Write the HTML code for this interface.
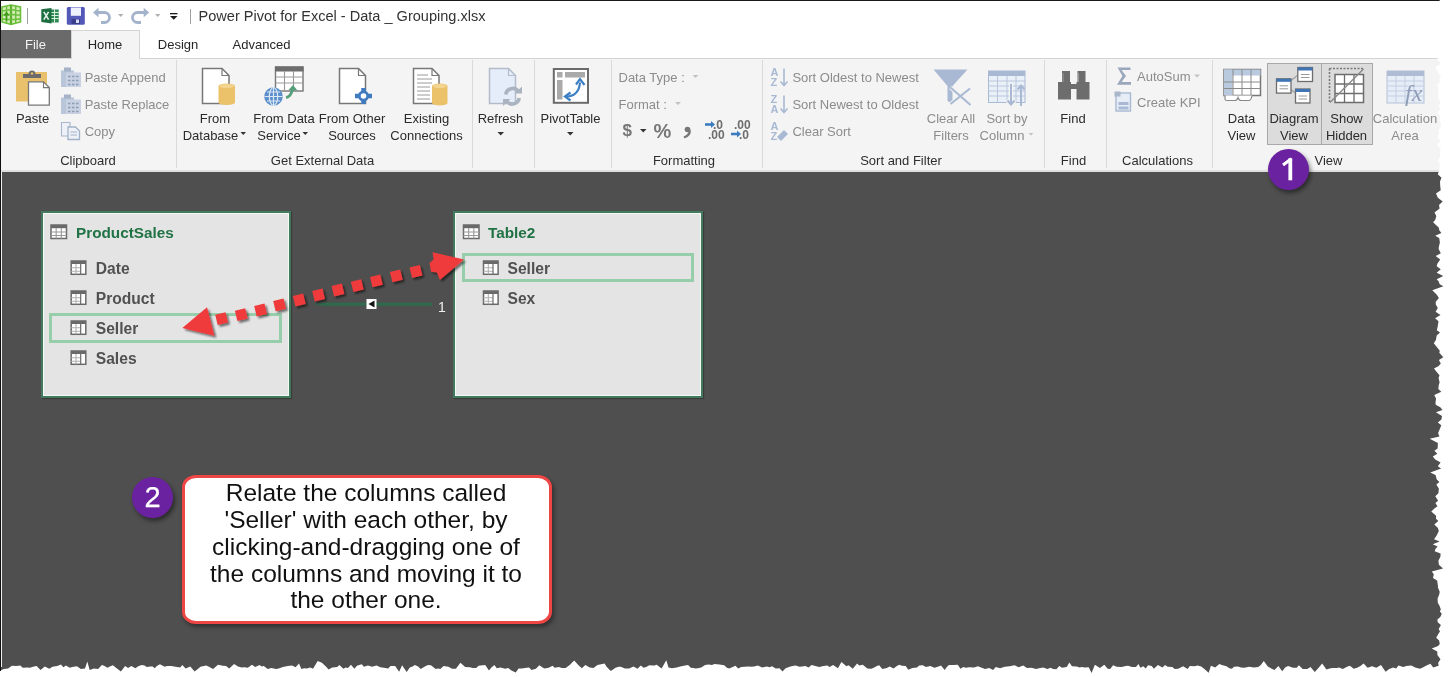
<!DOCTYPE html>
<html><head><meta charset="utf-8"><style>
html,body{margin:0;padding:0;width:1448px;height:677px;overflow:hidden;background:#ffffff;font-family:"Liberation Sans", sans-serif;}
#root{position:relative;width:1448px;height:677px;overflow:hidden;will-change:transform;}
</style></head><body><div id="root">
<div style="position:absolute;left:0px;top:0px;width:1448px;height:30px;background:#ffffff;"></div><div style="position:absolute;left:0px;top:30px;width:1448px;height:28px;background:#ffffff;"></div><div style="position:absolute;left:0px;top:58px;width:1448px;height:114px;background:#f4f4f4;"></div><div style="position:absolute;left:0px;top:58px;width:1448px;height:1px;background:#d4d4d4;"></div><div style="position:absolute;left:0px;top:169.5px;width:1448px;height:2.5px;background:#dfdfdf;"></div><div style="position:absolute;left:0px;top:172px;width:1448px;height:505px;background:#4f4f4f;"></div><div style="position:absolute;left:0px;top:0px;width:1448px;height:1px;background:#1a1a1a;"></div><div style="position:absolute;left:0px;top:30px;width:71px;height:28px;background:#6a6a6a;"></div><div style="position:absolute;left:71px;top:30px;width:69px;height:29px;background:#f4f4f4;border:1px solid #d4d4d4;border-bottom:none;box-sizing:border-box;"></div><div style="position:absolute;left:176px;top:60px;width:1px;height:108px;background:#dadada;"></div><div style="position:absolute;left:472px;top:60px;width:1px;height:108px;background:#dadada;"></div><div style="position:absolute;left:534px;top:60px;width:1px;height:108px;background:#dadada;"></div><div style="position:absolute;left:611px;top:60px;width:1px;height:108px;background:#dadada;"></div><div style="position:absolute;left:762px;top:60px;width:1px;height:108px;background:#dadada;"></div><div style="position:absolute;left:1044px;top:60px;width:1px;height:108px;background:#dadada;"></div><div style="position:absolute;left:1106px;top:60px;width:1px;height:108px;background:#dadada;"></div><div style="position:absolute;left:1212px;top:60px;width:1px;height:108px;background:#dadada;"></div><div style="position:absolute;left:1267px;top:63px;width:55.5px;height:81.5px;background:#dcdcdc;border:1.3px solid #a9a9a9;box-sizing:border-box;"></div><div style="position:absolute;left:1321px;top:63px;width:51.5px;height:81.5px;background:#dcdcdc;border:1.3px solid #a9a9a9;box-sizing:border-box;"></div><div style="position:absolute;left:198.50px;top:8.98px;font-size:14.55px;line-height:14.55px;color:#333333;font-weight:normal;white-space:nowrap;">Power Pivot for Excel - Data _ Grouping.xlsx</div><div style="position:absolute;left:190px;top:9px;width:1px;height:15px;background:#a0a0a0;"></div><div style="position:absolute;left:27px;top:8px;width:1px;height:16px;background:#a0a0a0;"></div><div style="position:absolute;left:5.50px;top:38.00px;width:60px;text-align:center;font-size:13px;line-height:13px;color:#f4f4f4;font-weight:normal;white-space:nowrap;">File</div><div style="position:absolute;left:75.00px;top:38.00px;width:60px;text-align:center;font-size:13px;line-height:13px;color:#262626;font-weight:normal;white-space:nowrap;">Home</div><div style="position:absolute;left:148.00px;top:38.00px;width:60px;text-align:center;font-size:13px;line-height:13px;color:#262626;font-weight:normal;white-space:nowrap;">Design</div><div style="position:absolute;left:221.50px;top:38.00px;width:80px;text-align:center;font-size:13px;line-height:13px;color:#262626;font-weight:normal;white-space:nowrap;">Advanced</div><div style="position:absolute;left:2.50px;top:112.00px;width:60px;text-align:center;font-size:13px;line-height:13px;color:#2b2b2b;font-weight:normal;white-space:nowrap;">Paste</div><div style="position:absolute;left:84.70px;top:70.50px;font-size:13px;line-height:13px;color:#8c8c8c;font-weight:normal;white-space:nowrap;">Paste Append</div><div style="position:absolute;left:84.70px;top:97.50px;font-size:13px;line-height:13px;color:#8c8c8c;font-weight:normal;white-space:nowrap;">Paste Replace</div><div style="position:absolute;left:84.70px;top:124.50px;font-size:13px;line-height:13px;color:#8c8c8c;font-weight:normal;white-space:nowrap;">Copy</div><div style="position:absolute;left:38.00px;top:154.00px;width:100px;text-align:center;font-size:13px;line-height:13px;color:#2e2e2e;font-weight:normal;white-space:nowrap;">Clipboard</div><div style="position:absolute;left:170.00px;top:112.00px;width:90px;text-align:center;font-size:13px;line-height:13px;color:#2b2b2b;font-weight:normal;white-space:nowrap;">From</div><div style="position:absolute;left:165.50px;top:129.00px;width:90px;text-align:center;font-size:13px;line-height:13px;color:#2b2b2b;font-weight:normal;white-space:nowrap;">Database</div><div style="position:absolute;left:239.00px;top:112.00px;width:90px;text-align:center;font-size:13px;line-height:13px;color:#2b2b2b;font-weight:normal;white-space:nowrap;">From Data</div><div style="position:absolute;left:234.00px;top:129.00px;width:90px;text-align:center;font-size:13px;line-height:13px;color:#2b2b2b;font-weight:normal;white-space:nowrap;">Service</div><div style="position:absolute;left:307.00px;top:112.00px;width:90px;text-align:center;font-size:13px;line-height:13px;color:#2b2b2b;font-weight:normal;white-space:nowrap;">From Other</div><div style="position:absolute;left:307.00px;top:129.00px;width:90px;text-align:center;font-size:13px;line-height:13px;color:#2b2b2b;font-weight:normal;white-space:nowrap;">Sources</div><div style="position:absolute;left:381.50px;top:112.00px;width:90px;text-align:center;font-size:13px;line-height:13px;color:#2b2b2b;font-weight:normal;white-space:nowrap;">Existing</div><div style="position:absolute;left:381.50px;top:129.00px;width:90px;text-align:center;font-size:13px;line-height:13px;color:#2b2b2b;font-weight:normal;white-space:nowrap;">Connections</div><div style="position:absolute;left:252.50px;top:154.00px;width:140px;text-align:center;font-size:13px;line-height:13px;color:#2e2e2e;font-weight:normal;white-space:nowrap;">Get External Data</div><div style="position:absolute;left:460.50px;top:112.00px;width:80px;text-align:center;font-size:13px;line-height:13px;color:#2b2b2b;font-weight:normal;white-space:nowrap;">Refresh</div><div style="position:absolute;left:530.50px;top:112.00px;width:80px;text-align:center;font-size:13px;line-height:13px;color:#2b2b2b;font-weight:normal;white-space:nowrap;">PivotTable</div><div style="position:absolute;left:634.00px;top:154.00px;width:100px;text-align:center;font-size:13px;line-height:13px;color:#2e2e2e;font-weight:normal;white-space:nowrap;">Formatting</div><div style="position:absolute;left:618.50px;top:70.50px;font-size:13px;line-height:13px;color:#8c8c8c;font-weight:normal;white-space:nowrap;">Data Type :</div><div style="position:absolute;left:618.50px;top:97.50px;font-size:13px;line-height:13px;color:#8c8c8c;font-weight:normal;white-space:nowrap;">Format :</div><div style="position:absolute;left:792.40px;top:70.50px;font-size:13px;line-height:13px;color:#8c8c8c;font-weight:normal;white-space:nowrap;">Sort Oldest to Newest</div><div style="position:absolute;left:792.40px;top:97.50px;font-size:13px;line-height:13px;color:#8c8c8c;font-weight:normal;white-space:nowrap;">Sort Newest to Oldest</div><div style="position:absolute;left:792.40px;top:124.50px;font-size:13px;line-height:13px;color:#8c8c8c;font-weight:normal;white-space:nowrap;">Clear Sort</div><div style="position:absolute;left:911.00px;top:112.00px;width:80px;text-align:center;font-size:13px;line-height:13px;color:#8c8c8c;font-weight:normal;white-space:nowrap;">Clear All</div><div style="position:absolute;left:911.00px;top:129.00px;width:80px;text-align:center;font-size:13px;line-height:13px;color:#8c8c8c;font-weight:normal;white-space:nowrap;">Filters</div><div style="position:absolute;left:967.00px;top:112.00px;width:80px;text-align:center;font-size:13px;line-height:13px;color:#8c8c8c;font-weight:normal;white-space:nowrap;">Sort by</div><div style="position:absolute;left:962.00px;top:129.00px;width:80px;text-align:center;font-size:13px;line-height:13px;color:#8c8c8c;font-weight:normal;white-space:nowrap;">Column</div><div style="position:absolute;left:831.00px;top:154.00px;width:140px;text-align:center;font-size:13px;line-height:13px;color:#2e2e2e;font-weight:normal;white-space:nowrap;">Sort and Filter</div><div style="position:absolute;left:1043.00px;top:112.00px;width:60px;text-align:center;font-size:13px;line-height:13px;color:#2b2b2b;font-weight:normal;white-space:nowrap;">Find</div><div style="position:absolute;left:1043.50px;top:154.00px;width:60px;text-align:center;font-size:13px;line-height:13px;color:#2e2e2e;font-weight:normal;white-space:nowrap;">Find</div><div style="position:absolute;left:1137.00px;top:70.00px;font-size:13px;line-height:13px;color:#8c8c8c;font-weight:normal;white-space:nowrap;">AutoSum</div><div style="position:absolute;left:1137.00px;top:96.00px;font-size:13px;line-height:13px;color:#8c8c8c;font-weight:normal;white-space:nowrap;">Create KPI</div><div style="position:absolute;left:1107.50px;top:154.00px;width:100px;text-align:center;font-size:13px;line-height:13px;color:#2e2e2e;font-weight:normal;white-space:nowrap;">Calculations</div><div style="position:absolute;left:1211.50px;top:112.00px;width:60px;text-align:center;font-size:13px;line-height:13px;color:#2b2b2b;font-weight:normal;white-space:nowrap;">Data</div><div style="position:absolute;left:1211.50px;top:129.00px;width:60px;text-align:center;font-size:13px;line-height:13px;color:#2b2b2b;font-weight:normal;white-space:nowrap;">View</div><div style="position:absolute;left:1264.00px;top:112.00px;width:60px;text-align:center;font-size:13px;line-height:13px;color:#2b2b2b;font-weight:normal;white-space:nowrap;">Diagram</div><div style="position:absolute;left:1264.00px;top:129.00px;width:60px;text-align:center;font-size:13px;line-height:13px;color:#2b2b2b;font-weight:normal;white-space:nowrap;">View</div><div style="position:absolute;left:1316.50px;top:112.00px;width:60px;text-align:center;font-size:13px;line-height:13px;color:#2b2b2b;font-weight:normal;white-space:nowrap;">Show</div><div style="position:absolute;left:1316.50px;top:129.00px;width:60px;text-align:center;font-size:13px;line-height:13px;color:#2b2b2b;font-weight:normal;white-space:nowrap;">Hidden</div><div style="position:absolute;left:1365.00px;top:112.00px;width:80px;text-align:center;font-size:13px;line-height:13px;color:#8c8c8c;font-weight:normal;white-space:nowrap;">Calculation</div><div style="position:absolute;left:1365.00px;top:129.00px;width:80px;text-align:center;font-size:13px;line-height:13px;color:#8c8c8c;font-weight:normal;white-space:nowrap;">Area</div><div style="position:absolute;left:1298.50px;top:154.00px;width:60px;text-align:center;font-size:13px;line-height:13px;color:#2e2e2e;font-weight:normal;white-space:nowrap;">View</div><div style="position:absolute;left:41px;top:211px;width:249.5px;height:187px;background:#e4e4e4;border:2px solid #437a5e;box-sizing:border-box;box-shadow:inset 1px 1px 0 #f2faf5, inset -1px -1px 0 #f2faf5, 1px 1px 1px rgba(0,0,0,0.25);"></div><div style="position:absolute;left:453px;top:211px;width:249.5px;height:187px;background:#e4e4e4;border:2px solid #437a5e;box-sizing:border-box;box-shadow:inset 1px 1px 0 #f2faf5, inset -1px -1px 0 #f2faf5, 1px 1px 1px rgba(0,0,0,0.25);"></div><div style="position:absolute;left:49px;top:313px;width:233px;height:30px;background:transparent;border:3.2px solid #96cdab;box-sizing:border-box;"></div><div style="position:absolute;left:462px;top:253px;width:232px;height:29px;background:transparent;border:3.2px solid #96cdab;box-sizing:border-box;"></div><div style="position:absolute;left:76.00px;top:225.05px;font-size:15.3px;line-height:15.3px;color:#217346;font-weight:bold;white-space:nowrap;">ProductSales</div><div style="position:absolute;left:95.80px;top:260.79px;font-size:15.6px;line-height:15.6px;color:#515151;font-weight:bold;white-space:nowrap;">Date</div><div style="position:absolute;left:95.80px;top:290.79px;font-size:15.6px;line-height:15.6px;color:#515151;font-weight:bold;white-space:nowrap;">Product</div><div style="position:absolute;left:95.80px;top:320.79px;font-size:15.6px;line-height:15.6px;color:#515151;font-weight:bold;white-space:nowrap;">Seller</div><div style="position:absolute;left:95.80px;top:350.79px;font-size:15.6px;line-height:15.6px;color:#515151;font-weight:bold;white-space:nowrap;">Sales</div><div style="position:absolute;left:488.00px;top:225.05px;font-size:15.3px;line-height:15.3px;color:#217346;font-weight:bold;white-space:nowrap;">Table2</div><div style="position:absolute;left:507.50px;top:260.79px;font-size:15.6px;line-height:15.6px;color:#515151;font-weight:bold;white-space:nowrap;">Seller</div><div style="position:absolute;left:507.50px;top:290.79px;font-size:15.6px;line-height:15.6px;color:#515151;font-weight:bold;white-space:nowrap;">Sex</div><div style="position:absolute;left:438.00px;top:299.65px;font-size:14px;line-height:14px;color:#f0f0f0;font-weight:normal;white-space:nowrap;">1</div><div style="position:absolute;left:182px;top:475px;width:370px;height:149px;background:#ffffff;border:3.6px solid #ee4545;border-radius:14px / 12px;box-sizing:border-box;box-shadow:2px 3px 4px rgba(0,0,0,0.4);"></div><div style="position:absolute;left:186.00px;top:481.16px;width:360px;text-align:center;font-size:24.5px;line-height:24.5px;color:#111111;font-weight:normal;white-space:nowrap;">Relate the columns called</div><div style="position:absolute;left:186.00px;top:507.96px;width:360px;text-align:center;font-size:24.5px;line-height:24.5px;color:#111111;font-weight:normal;white-space:nowrap;">'Seller' with each other, by</div><div style="position:absolute;left:186.00px;top:534.76px;width:360px;text-align:center;font-size:24.5px;line-height:24.5px;color:#111111;font-weight:normal;white-space:nowrap;">clicking-and-dragging one of</div><div style="position:absolute;left:186.00px;top:561.56px;width:360px;text-align:center;font-size:24.5px;line-height:24.5px;color:#111111;font-weight:normal;white-space:nowrap;">the columns and moving it to</div><div style="position:absolute;left:186.00px;top:588.36px;width:360px;text-align:center;font-size:24.5px;line-height:24.5px;color:#111111;font-weight:normal;white-space:nowrap;">the other one.</div><div style="position:absolute;left:1267.65px;top:148.95px;width:41.5px;height:41.5px;border-radius:50%;background:#6b22a0;box-shadow:2px 3px 4px rgba(0,0,0,0.45);"></div><div style="position:absolute;left:132.0px;top:476.5px;width:41px;height:41px;border-radius:50%;background:#6b22a0;box-shadow:2px 3px 4px rgba(0,0,0,0.45);"></div><div style="position:absolute;left:132.50px;top:482.65px;width:40px;text-align:center;font-size:29px;line-height:29px;color:#ffffff;font-weight:normal;white-space:nowrap;-webkit-text-stroke:0.25px #ffffff;">2</div><svg width="1448" height="677" style="position:absolute;left:0;top:0"><path d="M1290.3,180.3 V158.3" stroke="#ffffff" stroke-width="3.8" fill="none"/><path d="M1291.5,158.8 L1283,165" stroke="#ffffff" stroke-width="3.2" fill="none"/></svg>
<svg width="1448" height="677" viewBox="0 0 1448 677" style="position:absolute;left:0;top:0">
<g><path d="M2,7 L11,5 L20.5,7 L20.5,22 L11,24.5 L2,22 Z" fill="#d2ecb4" stroke="#6abf3c" stroke-width="1.6"/><path d="M11,5 L11,24.5" stroke="#5cb22e" stroke-width="2.2"/><path d="M2,11 L11,9.5 L20.5,11 M2,15 L11,14.5 L20.5,15 M2,19 L11,19.5 L20.5,19 M6.5,6 V23.2 M15.7,6 V23.2" stroke="#6abf3c" stroke-width="1.5" fill="none"/><path d="M6.5,21 L6.5,13.5 M4.3,15.5 L6.5,12.8 L8.7,15.5" stroke="#3f9a1c" stroke-width="1.5" fill="none"/></g><rect x="50" y="9.5" width="8.7" height="13" fill="#2f8a55"/><path d="M50.5,12.5 H58.7 M50.5,15.5 H58.7 M50.5,18.5 H58.7 M54.5,9.5 V22.5" stroke="#d9efe0" stroke-width="1"/><path d="M41.3,9.3 L51.5,7.9 L51.5,23.4 L41.3,22 Z" fill="#1d6f42"/><path d="M43.8,11.8 L48.6,19.6 M48.6,11.8 L43.8,19.6" stroke="#e6f3ea" stroke-width="1.6"/><rect x="66.8" y="7" width="18" height="17.7" rx="1.5" fill="#5257b8"/><rect x="70.8" y="7.5" width="10.2" height="8.3" fill="#eef0fb"/><rect x="71.5" y="19" width="8.5" height="5" fill="#3a3d8a"/><rect x="76" y="19.5" width="3" height="3.5" fill="#d8dbf5"/><path d="M96,12.5 H104.5 A5,5 0 0 1 104.5,22.5 H101" stroke="#a3b3cb" stroke-width="2.8" fill="none"/><path d="M93,12.5 L98.5,7.8 L98.5,17.2 Z" fill="#a3b3cb"/><path d="M118,14 L123.5,14 L120.75,17 Z" fill="#b0b0b0"/><path d="M146,12.5 H137.5 A5,5 0 0 0 137.5,22.5 H141" stroke="#a3b3cb" stroke-width="2.8" fill="none"/><path d="M149.2,12.5 L143.7,7.8 L143.7,17.2 Z" fill="#a3b3cb"/><path d="M155,14 L160.5,14 L157.75,17 Z" fill="#b0b0b0"/><rect x="170" y="13" width="7.5" height="1.3" fill="#1a1a1a"/><path d="M170,16 L177.5,16 L173.75,19.8 Z" fill="#1a1a1a"/><rect x="16" y="72" width="31" height="29.5" fill="#e9c16c"/><path d="M23,78 L23,74 L28.5,74 A3.5,3.5 0 0 1 35.5,74 L41,74 L41,78 Z" fill="#6b6b6b"/><circle cx="32" cy="73.5" r="1.2" fill="#e9c16c"/><path d="M28.5,81.8 L43.5,81.8 L49.3,87.6 L49.3,105.2 L28.5,105.2 Z" fill="#ffffff" stroke="#777" stroke-width="1.3"/><path d="M43.5,81.8 L43.5,87.6 L49.3,87.6" fill="none" stroke="#777" stroke-width="1.1"/><g fill="#b9c5d8"><rect x="61" y="70.5" width="13" height="16.5"/><rect x="64" y="67.5" width="7" height="4" fill="#a5b2c8"/><rect x="66" y="72.5" width="15" height="14.5" fill="#c8d2e2"/></g><path d="M68,76.5 H80 M68,80.5 H80 M68,84.5 H80" stroke="#8d9bb4" stroke-width="1.4" stroke-dasharray="2.5,1.5"/><g fill="#b9c5d8"><rect x="61" y="97.5" width="13" height="16.5"/><rect x="64" y="94.5" width="7" height="4" fill="#a5b2c8"/><rect x="66" y="99.5" width="15" height="14.5" fill="#c8d2e2"/></g><path d="M68,103.5 H80 M68,107.5 H80 M68,111.5 H80" stroke="#8d9bb4" stroke-width="1.4" stroke-dasharray="2.5,1.5"/><path d="M61.5,122.5 H70 V136 H61.5 Z" fill="#eef2f8" stroke="#a9b6cb" stroke-width="1.1"/><path d="M68,127 H75.5 L79.5,131 V139.5 H68 Z" fill="#eef2f8" stroke="#a3b1c8" stroke-width="1.3"/><path d="M70.5,132 H77 M70.5,135 H77" stroke="#a3b1c8" stroke-width="1"/><path d="M202.5,68.5 L222,68.5 L229,75.5 L229,103.5 L202.5,103.5 Z" fill="#ffffff" stroke="#777" stroke-width="1.5"/><path d="M222,68.5 L222,75.5 L229,75.5" fill="none" stroke="#777" stroke-width="1.2"/><path d="M218.5,86.0 A8.25,2.5 0 0 1 235,86.0 L235,102.5 A8.25,2.5 0 0 1 218.5,102.5 Z" fill="#ebc26a"/><ellipse cx="226.75" cy="86.0" rx="7.25" ry="2" fill="#f3d58f"/><rect x="275.5" y="67" width="27.5" height="24" fill="#fff" stroke="#777" stroke-width="1.4"/><rect x="275" y="66.5" width="28.5" height="5" fill="#6d6d6d"/><path d="M275.5,77 H303 M275.5,83 H303 M284.5,71 V91 M293.5,71 V91" stroke="#999" stroke-width="1.1"/><circle cx="273.5" cy="96.5" r="9.3" fill="#5b8fcb"/><path d="M264.5,96.5 H282.5 M273.5,87.5 V105.5 M267,92 H280 M267,101 H280" stroke="#dbe8f6" stroke-width="1.2"/><ellipse cx="273.5" cy="96.5" rx="4.2" ry="9" fill="none" stroke="#dbe8f6" stroke-width="1.2"/><path d="M286,97.5 Q291,97 292.5,89" stroke="#55a07a" stroke-width="2.8" fill="none"/><path d="M288.5,90 L293,85 L297.5,90.5 Z" fill="#55a07a"/><path d="M339.5,68.5 L358.5,68.5 L365.5,75.5 L365.5,103.5 L339.5,103.5 Z" fill="#ffffff" stroke="#777" stroke-width="1.5"/><path d="M358.5,68.5 L358.5,75.5 L365.5,75.5" fill="none" stroke="#777" stroke-width="1.2"/><path d="M363.5,88 V104 M355,96 H372" stroke="#3f7bc0" stroke-width="4.5"/><circle cx="363.5" cy="96" r="5.5" fill="#3f7bc0"/><circle cx="363.5" cy="96" r="2.8" fill="#fff"/><path d="M413.5,68.5 L432,68.5 L439,75.5 L439,103.5 L413.5,103.5 Z" fill="#ffffff" stroke="#777" stroke-width="1.5"/><path d="M432,68.5 L432,75.5 L439,75.5" fill="none" stroke="#777" stroke-width="1.2"/><path d="M417,75 H428 M417,79 H432 M417,83 H432 M417,87 H430 M417,91 H430 M417,95 H430 M417,99 H430" stroke="#999" stroke-width="1"/><path d="M432,86.0 A7.75,2.5 0 0 1 447.5,86.0 L447.5,103.0 A7.75,2.5 0 0 1 432,103.0 Z" fill="#ebc26a"/><ellipse cx="439.75" cy="86.0" rx="6.75" ry="2" fill="#f3d58f"/><path d="M489.5,68.5 L508.5,68.5 L515.5,75.5 L515.5,103.5 L489.5,103.5 Z" fill="#e4edf9" stroke="#b2bccb" stroke-width="1.5"/><path d="M508.5,68.5 L508.5,75.5 L515.5,75.5" fill="none" stroke="#b2bccb" stroke-width="1.2"/><path d="M505.8,94.5 A7,7 0 0 1 518.5,91.5" fill="none" stroke="#abb3c1" stroke-width="3.6"/><path d="M519.2,98 A7,7 0 0 1 506.5,101" fill="none" stroke="#abb3c1" stroke-width="3.6"/><path d="M514.5,93.5 L522,93.5 L522,86.5 Z" fill="#abb3c1"/><path d="M510.5,99 L503,99 L503,106 Z" fill="#abb3c1"/><rect x="553.8" y="69" width="34.2" height="33.8" fill="#fff" stroke="#6b6b6b" stroke-width="2"/><rect x="557" y="72" width="5.5" height="5.5" fill="#aaaaaa"/><rect x="565" y="72" width="20" height="5.5" fill="#aaaaaa"/><rect x="557" y="80" width="5.5" height="19.5" fill="#aaaaaa"/><path d="M566.5,96.5 Q579,96 580,82.5" stroke="#3d7fc4" stroke-width="2.2" fill="none"/><path d="M576,84.5 L580,79 L584.5,85" stroke="#3d7fc4" stroke-width="2.2" fill="none"/><path d="M570.5,92.5 L565,96.5 L570.5,100.5" stroke="#3d7fc4" stroke-width="2.2" fill="none"/><path d="M497.5,132 L504,132 L500.75,135.5 Z" fill="#333"/><path d="M567,132 L573.5,132 L570.25,135.5 Z" fill="#333"/><path d="M240.5,132 L246,132 L243.25,135 Z" fill="#333"/><path d="M302.5,132 L308,132 L305.25,135 Z" fill="#333"/><path d="M692.5,75 L698.5,75 L695.5,78 Z" fill="#c2c2c2"/><path d="M675,102 L681,102 L678,105 Z" fill="#c2c2c2"/><text x="622.5" y="136" font-family="Liberation Sans" font-weight="bold" font-size="17" fill="#777">$</text><path d="M640,129 L646.5,129 L643.25,132.5 Z" fill="#333"/><text x="653.5" y="138" font-family="Liberation Sans" font-size="20" font-weight="bold" fill="#777">%</text><circle cx="687.5" cy="129.5" r="2.8" fill="#777"/><path d="M689.5,130 Q690.5,135 684,137.5" stroke="#777" stroke-width="2.4" fill="none"/><path d="M705,124.5 H712" stroke="#3d7cc0" stroke-width="2.6"/><path d="M711,121 L715,124.5 L711,128 Z" fill="#3d7cc0"/><text x="713" y="129" font-family="Liberation Sans" font-weight="bold" font-size="12" fill="#6d6d6d">.0</text><text x="708" y="138.5" font-family="Liberation Sans" font-weight="bold" font-size="12" fill="#6d6d6d">.00</text><text x="734" y="129" font-family="Liberation Sans" font-weight="bold" font-size="12" fill="#6d6d6d">.00</text><path d="M731,134 H738" stroke="#3d7cc0" stroke-width="2.6"/><path d="M737,130.5 L741,134 L737,137.5 Z" fill="#3d7cc0"/><text x="739" y="138.5" font-family="Liberation Sans" font-weight="bold" font-size="12" fill="#6d6d6d">.0</text><text x="770.5" y="76.0" font-family="Liberation Sans" font-weight="bold" font-size="11" fill="#a9b9d3">A</text><text x="770.5" y="85.5" font-family="Liberation Sans" font-weight="bold" font-size="11" fill="#a9b9d3">Z</text><path d="M784,68.5 V85 M780.5,81.5 L784,85.5 L787.5,81.5" stroke="#a9b9d3" stroke-width="1.6" fill="none"/><text x="770.5" y="103.0" font-family="Liberation Sans" font-weight="bold" font-size="11" fill="#a9b9d3">Z</text><text x="770.5" y="112.5" font-family="Liberation Sans" font-weight="bold" font-size="11" fill="#a9b9d3">A</text><path d="M784,95.5 V112 M780.5,108.5 L784,112.5 L787.5,108.5" stroke="#a9b9d3" stroke-width="1.6" fill="none"/><text x="770.5" y="130.0" font-family="Liberation Sans" font-weight="bold" font-size="11" fill="#a9b9d3">A</text><text x="770.5" y="139.5" font-family="Liberation Sans" font-weight="bold" font-size="11" fill="#a9b9d3">Z</text><path d="M777,137 L784,130 L788,134 L781,141 Z" fill="#a9b9d3"/><path d="M933.5,69.5 H967.5 L952.5,86 V104 L947.5,101 V86 Z" fill="#a9b9d3"/><path d="M950.5,87.5 L970.5,105 M950.5,104 L970,88.5" stroke="#f3f3f3" stroke-width="4"/><path d="M950.5,87.5 L970.5,105 M950.5,104 L970,88.5" stroke="#a9b9d3" stroke-width="2"/><rect x="988.5" y="71" width="36.5" height="31.5" fill="#eaf0f8" stroke="#a9b9d3" stroke-width="1"/><rect x="988.5" y="71" width="36.5" height="5" fill="#a9b9d3"/><path d="M988.5,81 H1025 M988.5,86 H1025 M988.5,91 H1025 M988.5,96 H1025 M997.5,76 V102.5 M1007,76 V102.5 M1016,76 V102.5" stroke="#b8c6dc" stroke-width="1"/><path d="M1011,84 V104 M1007,100 L1011,105 L1015,100" stroke="#f3f3f3" stroke-width="4" fill="none"/><path d="M1011,84 V104 M1007.5,100.5 L1011,104.5 L1014.5,100.5" stroke="#a9b9d3" stroke-width="2" fill="none"/><path d="M1021,106 V86 M1017.5,89.5 L1021,85.5 L1024.5,89.5" stroke="#a9b9d3" stroke-width="2" fill="none"/><path d="M1028.5,133 L1033.5,133 L1031,135.5 Z" fill="#c2c2c2"/><g fill="#6d6d6d"><rect x="1062" y="71" width="8" height="12"/><rect x="1077.5" y="71" width="8" height="12"/><rect x="1058" y="82" width="13" height="17.5"/><rect x="1076.5" y="82" width="13" height="17.5"/><rect x="1070" y="84" width="7" height="5"/></g><path d="M1063,73 V82 M1078.5,73 V82" stroke="#999" stroke-width="1"/><path d="M1117.5,67.5 H1130.5 V70 H1121.5 L1126,76 L1121.5,82 H1131 V84.8 H1117 L1122.5,76 Z" fill="#9aa6bb"/><path d="M1194,74.5 L1200,74.5 L1197,77.5 Z" fill="#c2c2c2"/><rect x="1116" y="93" width="14.5" height="18" fill="#e6edf6" stroke="#a9b9d3" stroke-width="1.4"/><rect x="1118.5" y="102" width="10" height="3" fill="#a9b9d3"/><rect x="1118.5" y="106.5" width="10" height="3" fill="#a9b9d3"/><rect x="1114.5" y="91.5" width="6" height="5" fill="#aab6c9"/><rect x="1224" y="69.5" width="36.5" height="26" fill="#ffffff" stroke="#777" stroke-width="1.5"/><rect x="1224" y="69.5" width="36.5" height="6" fill="#b9c9de"/><rect x="1224" y="69.5" width="8.5" height="26" fill="#b9c9de"/><path d="M1224,82 H1260.5 M1224,88.5 H1260.5 M1233,69.5 V95.5 M1242,69.5 V95.5 M1251,69.5 V95.5" stroke="#8a8a8a" stroke-width="1"/><path d="M1225,95.5 V99 Q1225,100.5 1227,100.5 H1235 Q1237,100.5 1238,97.5 Q1239,100.5 1241,100.5 H1249 Q1251,100.5 1252,95.5" fill="#fff" stroke="#888" stroke-width="1.2"/><path d="M1291,80.5 L1298,75 M1291,89.5 L1296,93.5" stroke="#a0a0a0" stroke-width="1.3"/><rect x="1297.8" y="67.5" width="14.7" height="14" fill="#fff" stroke="#6d6d6d" stroke-width="1.3"/><rect x="1297.8" y="67.5" width="14.7" height="3" fill="#3f74b5"/><path d="M1300.8,74.5 H1309.5 M1300.8,77.5 H1309.5" stroke="#999" stroke-width="1"/><rect x="1276.5" y="78.8" width="14.5" height="14.3" fill="#fff" stroke="#6d6d6d" stroke-width="1.3"/><rect x="1276.5" y="78.8" width="14.5" height="3" fill="#3f74b5"/><path d="M1279.5,85.8 H1288.0 M1279.5,88.8 H1288.0" stroke="#999" stroke-width="1"/><rect x="1295.5" y="89" width="14.5" height="14" fill="#fff" stroke="#6d6d6d" stroke-width="1.3"/><rect x="1295.5" y="89" width="14.5" height="3" fill="#3f74b5"/><path d="M1298.5,96 H1307.0 M1298.5,99 H1307.0" stroke="#999" stroke-width="1"/><path d="M1329.5,68.5 H1364 M1329.5,68.5 V103" stroke="#777" stroke-width="1.6" stroke-dasharray="2,1.5"/><rect x="1335" y="74.5" width="28.5" height="28" fill="#fff" stroke="#6d6d6d" stroke-width="1.5"/><path d="M1335,84 H1363.5 M1335,93.5 H1363.5 M1344.5,74.5 V102.5 M1354,74.5 V102.5" stroke="#6d6d6d" stroke-width="1.3"/><path d="M1330,102.5 L1363.5,69" stroke="#8a8a8a" stroke-width="1.5"/><rect x="1387" y="71" width="37" height="32" fill="#e6edf7" stroke="#b3c1d8" stroke-width="1"/><rect x="1387" y="71" width="37" height="5" fill="#aebcd4"/><path d="M1387,81 H1424 M1387,86 H1424 M1387,91 H1424 M1387,96 H1424 M1396,76 V103 M1405,76 V103 M1414,76 V103" stroke="#c3cfe2" stroke-width="1"/><text x="1405" y="101" font-family="Liberation Serif" font-style="italic" font-size="24" fill="#8e9cb6">fx</text><rect x="51" y="225" width="15.5" height="13.5" fill="#ffffff" stroke="#6a6a6a" stroke-width="1.5"/><rect x="51" y="225" width="15.5" height="3.2" fill="#6a6a6a"/><path d="M51,232 H66.5 M51,235.5 H66.5 M56.166666666666664,228 V238.5 M61.333333333333336,228 V238.5" stroke="#9a9a9a" stroke-width="1.1"/><rect x="71.2" y="261" width="14.6" height="13.3" fill="#ffffff" stroke="#6a6a6a" stroke-width="1.5"/><rect x="71.2" y="261" width="14.6" height="3" fill="#6a6a6a"/><path d="M71.2,267.8 H80.69 M71.2,271.2 H80.69 M76.018,264 V274.3" stroke="#b0b0b0" stroke-width="1.1"/><path d="M80.69,264 V274.3" stroke="#6a6a6a" stroke-width="1.2"/><rect x="71.2" y="291" width="14.6" height="13.3" fill="#ffffff" stroke="#6a6a6a" stroke-width="1.5"/><rect x="71.2" y="291" width="14.6" height="3" fill="#6a6a6a"/><path d="M71.2,297.8 H80.69 M71.2,301.2 H80.69 M76.018,294 V304.3" stroke="#b0b0b0" stroke-width="1.1"/><path d="M80.69,294 V304.3" stroke="#6a6a6a" stroke-width="1.2"/><rect x="71.2" y="321" width="14.6" height="13.3" fill="#ffffff" stroke="#6a6a6a" stroke-width="1.5"/><rect x="71.2" y="321" width="14.6" height="3" fill="#6a6a6a"/><path d="M71.2,327.8 H80.69 M71.2,331.2 H80.69 M76.018,324 V334.3" stroke="#b0b0b0" stroke-width="1.1"/><path d="M80.69,324 V334.3" stroke="#6a6a6a" stroke-width="1.2"/><rect x="71.2" y="351" width="14.6" height="13.3" fill="#ffffff" stroke="#6a6a6a" stroke-width="1.5"/><rect x="71.2" y="351" width="14.6" height="3" fill="#6a6a6a"/><path d="M71.2,357.8 H80.69 M71.2,361.2 H80.69 M76.018,354 V364.3" stroke="#b0b0b0" stroke-width="1.1"/><path d="M80.69,354 V364.3" stroke="#6a6a6a" stroke-width="1.2"/><rect x="463.5" y="225" width="15.5" height="13.5" fill="#ffffff" stroke="#6a6a6a" stroke-width="1.5"/><rect x="463.5" y="225" width="15.5" height="3.2" fill="#6a6a6a"/><path d="M463.5,232 H479.0 M463.5,235.5 H479.0 M468.6666666666667,228 V238.5 M473.8333333333333,228 V238.5" stroke="#9a9a9a" stroke-width="1.1"/><rect x="483.5" y="261" width="14.6" height="13.3" fill="#ffffff" stroke="#6a6a6a" stroke-width="1.5"/><rect x="483.5" y="261" width="14.6" height="3" fill="#6a6a6a"/><path d="M483.5,267.8 H492.99 M483.5,271.2 H492.99 M488.318,264 V274.3" stroke="#b0b0b0" stroke-width="1.1"/><path d="M492.99,264 V274.3" stroke="#6a6a6a" stroke-width="1.2"/><rect x="483.5" y="291" width="14.6" height="13.3" fill="#ffffff" stroke="#6a6a6a" stroke-width="1.5"/><rect x="483.5" y="291" width="14.6" height="3" fill="#6a6a6a"/><path d="M483.5,297.8 H492.99 M483.5,301.2 H492.99 M488.318,294 V304.3" stroke="#b0b0b0" stroke-width="1.1"/><path d="M492.99,294 V304.3" stroke="#6a6a6a" stroke-width="1.2"/><defs><linearGradient id="lg" x1="312" y1="0" x2="322" y2="0" gradientUnits="userSpaceOnUse"><stop offset="0" stop-color="#2e6a4b" stop-opacity="0"/><stop offset="1" stop-color="#2e6a4b" stop-opacity="1"/></linearGradient></defs><rect x="312" y="302.8" width="120" height="2.8" fill="url(#lg)"/><rect x="322" y="302.8" width="110" height="2.8" fill="#2e6a4b"/><rect x="366.5" y="299" width="10" height="10" fill="#ffffff"/><path d="M368.5,304 L374.5,300.5 L374.5,307.5 Z" fill="#111"/><defs><filter id="sh" x="-20%" y="-20%" width="140%" height="140%"><feGaussianBlur in="SourceAlpha" stdDeviation="1.2"/><feOffset dx="1.5" dy="2" result="b"/><feComponentTransfer><feFuncA type="linear" slope="0.55"/></feComponentTransfer><feMerge><feMergeNode/><feMergeNode in="SourceGraphic"/></feMerge></filter></defs><g filter="url(#sh)" fill="#ef3b3b"><rect x="216.3" y="313.4" width="10.6" height="10.6" transform="rotate(-13.6 221.6 318.7)"/><rect x="236.0" y="309.3" width="10.6" height="10.6" transform="rotate(-13.6 241.3 314.6)"/><rect x="255.3" y="304.7" width="10.6" height="10.6" transform="rotate(-13.6 260.6 310)"/><rect x="274.3" y="299.5" width="10.6" height="10.6" transform="rotate(-13.6 279.6 304.8)"/><rect x="294.0" y="294.7" width="10.6" height="10.6" transform="rotate(-13.6 299.3 300)"/><rect x="313.3" y="289.7" width="10.6" height="10.6" transform="rotate(-13.6 318.6 295)"/><rect x="332.7" y="284.7" width="10.6" height="10.6" transform="rotate(-13.6 338 290)"/><rect x="352.0" y="280.3" width="10.6" height="10.6" transform="rotate(-13.6 357.3 285.6)"/><rect x="371.1" y="275.5" width="10.6" height="10.6" transform="rotate(-13.6 376.4 280.8)"/><rect x="391.0" y="270.5" width="10.6" height="10.6" transform="rotate(-13.6 396.3 275.8)"/><rect x="410.7" y="266.2" width="10.6" height="10.6" transform="rotate(-13.6 416 271.5)"/><path d="M182.3,328 L207,307.3 L214.4,335.7 Z"/><path d="M464,259.4 L432.5,252.2 L433.6,259.6 L429.5,262.9 L431,271.8 L436.9,272.5 L439.9,279.9 Z"/></g><path d="M1448,0 L1439.5,0.0 L1440.8,4.0 L1437.1,8.3 L1439.6,12.7 L1438.9,14.9 L1437.6,18.3 L1440.7,21.0 L1440.9,23.4 L1437.0,25.7 L1437.9,28.2 L1438.2,32.4 L1439.7,35.8 L1439.8,40.1 L1438.2,44.3 L1436.4,46.8 L1437.0,50.3 L1438.2,53.1 L1438.3,56.3 L1437.2,60.1 L1440.0,62.1 L1440.2,64.2 L1435.1,67.6 L1437.8,72.0 L1440.8,76.3 L1439.1,79.2 L1440.0,81.5 L1437.1,85.6 L1438.4,87.9 L1438.4,92.2 L1438.2,95.5 L1438.4,98.0 L1440.6,102.5 L1438.6,105.8 L1440.3,109.3 L1437.2,112.3 L1439.0,114.4 L1439.9,116.7 L1439.8,120.3 L1440.4,122.7 L1441.0,125.8 L1438.8,130.3 L1438.9,134.1 L1437.6,137.1 L1440.8,141.6 L1437.0,144.8 L1440.5,148.8 L1440.1,152.7 L1440.0,156.4 L1438.1,160.2 L1439.8,164.1 L1439.6,168.5 L1439.2,170.5 L1437.8,174.2 L1441.5,177.8 L1440.0,181.6 L1440.2,185.7 L1440.7,190.2 L1436.0,193.5 L1437.9,197.8 L1442.7,201.6 L1439.0,205.1 L1439.6,208.6 L1434.5,212.5 L1436.3,216.1 L1435.3,219.7 L1433.1,222.2 L1435.7,224.7 L1438.7,227.6 L1439.3,230.2 L1441.4,232.9 L1435.2,235.8 L1439.2,238.1 L1439.9,242.5 L1438.9,246.5 L1438.6,248.9 L1440.8,253.3 L1435.7,256.1 L1440.2,259.6 L1437.3,263.8 L1436.7,266.3 L1440.8,269.3 L1436.6,272.8 L1443.3,276.0 L1436.7,279.3 L1438.7,281.6 L1439.7,284.3 L1443.4,286.3 L1432.3,290.3 L1436.8,294.8 L1438.9,297.9 L1435.7,301.8 L1435.8,304.6 L1437.8,307.9 L1435.6,311.7 L1440.5,314.9 L1435.1,318.2 L1438.5,321.3 L1437.9,324.9 L1437.4,327.9 L1436.8,330.3 L1440.0,332.5 L1436.7,335.6 L1435.9,339.9 L1433.8,343.2 L1436.6,346.7 L1439.8,350.8 L1439.3,352.8 L1443.3,357.3 L1438.9,359.9 L1440.8,363.6 L1438.7,366.0 L1434.0,368.4 L1436.3,371.4 L1439.5,375.2 L1438.6,378.0 L1439.6,382.4 L1438.8,384.7 L1438.3,389.0 L1441.3,391.7 L1434.3,395.0 L1436.1,398.8 L1435.5,402.4 L1435.7,404.7 L1440.3,407.3 L1442.5,410.1 L1435.9,412.2 L1442.0,415.9 L1441.4,419.6 L1437.8,422.5 L1441.3,425.3 L1439.8,429.0 L1438.1,433.1 L1439.4,436.5 L1429.7,438.8 L1437.9,443.0 L1437.8,445.0 L1437.6,448.5 L1434.4,450.8 L1437.3,453.7 L1432.8,456.4 L1435.2,459.6 L1440.6,462.6 L1437.8,466.3 L1441.1,468.5 L1430.3,472.4 L1435.5,474.9 L1436.8,479.4 L1439.4,482.1 L1436.4,484.5 L1438.9,488.8 L1438.4,493.3 L1435.3,496.3 L1438.1,500.8 L1435.4,503.0 L1437.5,506.2 L1434.4,508.4 L1431.3,511.4 L1436.1,515.8 L1436.0,518.8 L1438.3,521.1 L1434.3,524.6 L1437.9,527.9 L1438.8,530.9 L1436.8,535.2 L1434.1,539.2 L1439.6,541.5 L1432.7,544.2 L1437.6,546.4 L1435.4,549.1 L1434.7,551.2 L1440.6,553.4 L1440.4,556.8 L1438.4,560.7 L1438.9,564.8 L1443.0,568.6 L1431.8,571.5 L1433.8,574.2 L1433.0,578.1 L1437.1,580.4 L1437.8,584.8 L1438.0,587.7 L1439.7,591.8 L1439.3,594.2 L1437.6,598.5 L1437.8,602.8 L1439.6,605.9 L1440.8,609.3 L1439.9,611.5 L1441.8,613.7 L1440.3,616.9 L1437.4,619.4 L1437.7,622.3 L1440.9,624.9 L1438.7,629.0 L1440.0,631.4 L1438.6,633.5 L1436.2,637.7 L1439.1,640.5 L1439.8,644.1 L1438.1,646.1 L1431.7,648.6 L1437.3,651.4 L1437.4,655.1 L1440.5,659.2 L1438.2,662.8 L1438.6,665.8 L1431.8,669.1 L1438.5,671.9 L1436.8,675.7 L1448,677 Z" fill="#ffffff"/><path d="M0,677 L0.0,670.5 L4.0,669.0 L8.1,668.5 L11.9,665.7 L16.6,665.9 L20.2,665.4 L22.8,667.7 L27.5,667.5 L29.8,667.8 L34.0,666.4 L36.6,666.1 L40.5,670.1 L44.8,666.4 L49.3,668.7 L52.5,666.7 L57.2,666.1 L61.0,664.4 L63.4,667.3 L65.9,665.6 L69.9,667.8 L72.1,666.9 L76.9,666.2 L80.9,668.9 L85.0,668.5 L87.3,661.6 L89.7,670.1 L93.9,668.4 L98.1,668.9 L101.9,665.1 L104.1,665.7 L107.5,667.8 L109.8,666.6 L112.9,665.3 L116.0,667.8 L120.9,671.6 L125.1,665.9 L128.1,668.0 L131.3,666.1 L135.4,668.3 L138.2,666.3 L141.8,665.0 L144.5,665.4 L146.8,666.9 L150.4,666.5 L152.7,666.4 L154.7,668.2 L156.8,665.9 L159.9,664.3 L164.8,666.7 L167.1,666.0 L171.2,666.0 L175.5,666.7 L180.2,667.6 L182.3,664.9 L185.6,668.6 L190.3,666.5 L194.6,671.5 L197.8,669.1 L200.5,666.7 L203.9,666.1 L206.3,665.5 L208.5,666.5 L213.1,668.9 L218.0,664.8 L222.8,665.8 L226.1,666.0 L229.2,668.4 L234.1,664.0 L238.0,666.4 L241.5,667.4 L244.2,667.3 L247.8,667.8 L252.0,664.8 L255.2,667.0 L259.6,665.0 L261.7,666.5 L263.8,666.1 L267.7,668.9 L271.3,667.9 L276.2,669.1 L278.7,668.4 L282.9,667.1 L287.7,666.1 L292.1,665.4 L295.6,667.3 L299.0,663.5 L301.4,669.1 L304.2,668.2 L307.0,668.4 L310.2,667.6 L313.0,668.7 L317.7,661.1 L321.9,662.7 L326.4,667.0 L328.5,669.6 L332.3,667.5 L337.2,667.1 L339.4,665.1 L343.4,668.7 L345.6,667.6 L348.0,668.1 L350.9,664.8 L354.4,668.8 L356.9,665.8 L361.7,664.2 L364.0,666.7 L367.9,665.5 L372.0,666.8 L376.7,665.4 L380.2,667.2 L383.8,667.7 L388.2,668.5 L390.5,665.9 L395.2,666.0 L399.1,671.7 L402.1,665.3 L406.7,672.1 L409.8,667.6 L412.6,666.6 L414.9,665.1 L418.1,666.6 L420.7,669.0 L425.3,666.2 L428.0,664.9 L430.9,665.3 L435.7,669.0 L438.0,668.6 L440.3,669.1 L443.6,666.0 L448.5,666.7 L452.0,668.8 L455.9,668.8 L460.4,662.7 L465.2,666.9 L469.9,667.3 L472.8,668.1 L476.2,668.1 L478.6,665.7 L482.8,665.3 L485.2,665.0 L489.0,670.6 L491.4,667.4 L494.4,665.0 L496.8,668.2 L500.6,667.6 L505.2,668.8 L508.2,667.9 L511.4,670.6 L515.7,672.4 L518.6,668.6 L521.9,668.5 L524.9,668.0 L529.1,667.5 L531.5,669.9 L535.9,668.8 L539.3,665.3 L544.2,668.6 L548.7,667.7 L552.6,665.8 L554.7,667.7 L558.9,667.0 L561.8,668.0 L565.6,668.1 L569.7,665.1 L574.2,660.6 L578.5,665.3 L581.8,668.3 L585.4,664.9 L589.7,667.5 L593.5,668.0 L597.4,664.9 L602.3,664.1 L604.6,663.6 L606.6,666.7 L610.8,671.0 L615.5,667.8 L618.7,666.8 L620.8,666.8 L624.9,668.6 L629.2,668.6 L633.5,666.6 L637.5,668.7 L640.8,665.6 L643.6,667.8 L646.2,667.1 L649.3,665.2 L652.4,665.4 L654.4,665.5 L656.7,664.8 L661.6,668.5 L666.3,660.2 L668.5,667.4 L671.9,668.3 L676.7,667.5 L679.2,666.7 L683.7,665.8 L688.1,665.1 L690.8,667.7 L693.1,668.0 L696.0,668.6 L699.0,668.0 L701.2,667.6 L705.1,665.0 L708.5,664.5 L711.9,665.1 L714.6,664.1 L719.4,664.5 L724.2,665.2 L726.9,667.8 L729.2,668.6 L733.2,666.8 L735.4,665.8 L738.2,668.4 L741.2,667.0 L744.9,666.8 L748.8,666.6 L751.2,666.7 L754.1,666.4 L757.9,665.6 L762.1,667.5 L766.8,666.4 L769.6,667.3 L772.1,666.3 L775.7,668.6 L779.5,668.3 L782.5,671.4 L785.6,668.2 L790.4,666.5 L795.4,665.4 L799.6,666.8 L802.1,666.6 L805.3,665.9 L808.6,667.5 L811.5,665.0 L815.4,665.9 L819.2,667.0 L823.5,666.1 L827.4,665.5 L829.5,667.0 L833.1,665.0 L838.0,668.3 L841.4,661.9 L846.4,666.2 L848.6,665.3 L852.8,668.8 L857.1,663.6 L859.3,665.6 L862.8,664.8 L867.3,668.5 L871.5,668.8 L874.7,667.3 L876.8,665.9 L879.2,665.2 L882.3,669.0 L886.8,668.1 L889.7,666.5 L893.6,668.6 L896.5,666.3 L899.2,664.8 L901.9,665.7 L905.7,666.0 L908.3,669.8 L912.4,668.0 L917.0,667.6 L919.2,665.6 L922.9,665.2 L925.9,666.9 L930.4,666.1 L934.3,667.7 L937.1,666.9 L941.0,665.4 L944.7,669.9 L946.8,667.0 L948.9,665.0 L953.6,665.1 L957.7,664.8 L960.5,668.7 L963.3,666.9 L965.7,667.7 L969.2,667.2 L974.0,667.5 L978.0,666.3 L981.1,667.5 L985.1,668.9 L989.3,667.9 L993.1,670.1 L995.8,667.0 L1000.0,668.2 L1004.8,666.7 L1009.7,666.2 L1014.6,665.2 L1018.6,667.2 L1023.2,665.4 L1027.0,667.9 L1031.4,667.7 L1036.1,669.0 L1039.1,668.2 L1043.2,667.6 L1047.3,669.1 L1050.8,667.7 L1052.9,669.0 L1056.4,669.3 L1059.3,666.1 L1062.0,667.7 L1066.7,666.9 L1069.4,662.6 L1071.9,666.2 L1076.7,666.4 L1079.6,667.6 L1081.9,667.1 L1084.4,667.6 L1088.7,667.2 L1091.6,672.9 L1094.9,664.8 L1099.9,668.0 L1104.3,664.8 L1107.7,668.8 L1110.1,669.1 L1113.1,665.2 L1116.6,666.8 L1121.5,666.9 L1125.8,665.9 L1128.1,665.8 L1132.0,667.1 L1136.0,667.1 L1138.4,664.0 L1140.5,667.8 L1143.2,666.2 L1145.8,668.6 L1148.0,665.2 L1151.7,666.1 L1153.9,668.7 L1157.9,665.0 L1162.4,667.4 L1165.1,665.1 L1167.6,666.8 L1172.3,667.0 L1174.7,669.0 L1178.2,668.7 L1183.1,666.2 L1187.6,668.9 L1189.8,666.0 L1194.6,666.3 L1197.6,665.6 L1201.2,666.4 L1204.4,669.0 L1208.7,672.7 L1210.9,665.7 L1215.2,667.5 L1219.4,663.9 L1221.7,665.0 L1226.5,666.3 L1229.4,668.2 L1231.9,668.7 L1234.0,666.8 L1238.0,666.4 L1240.9,667.5 L1244.3,667.8 L1249.2,666.7 L1254.0,667.5 L1258.3,667.1 L1260.8,664.9 L1263.8,661.1 L1267.8,666.4 L1271.8,668.8 L1274.5,670.0 L1278.4,666.1 L1282.2,671.2 L1285.1,667.5 L1288.1,666.0 L1293.0,667.7 L1296.7,667.7 L1298.9,665.3 L1302.7,669.1 L1307.3,669.1 L1310.5,666.9 L1314.8,671.9 L1318.4,668.1 L1322.2,663.6 L1326.4,669.5 L1330.6,668.2 L1333.0,668.1 L1337.0,667.9 L1339.0,667.4 L1342.8,669.1 L1347.0,666.7 L1349.9,665.8 L1353.7,668.8 L1357.2,667.7 L1360.4,666.0 L1363.6,663.6 L1367.6,667.7 L1372.1,666.2 L1376.3,667.8 L1381.0,664.9 L1385.6,671.7 L1389.2,668.9 L1393.2,667.6 L1396.2,668.4 L1398.4,665.4 L1403.3,667.0 L1406.3,665.9 L1411.2,665.6 L1415.9,667.8 L1420.1,668.8 L1422.7,667.5 L1426.5,665.5 L1430.4,663.8 L1433.2,667.6 L1437.2,666.2 L1440.8,668.3 L1444.7,667.3 L1447.0,665.3 L1448,677 Z" fill="#ffffff"/><rect x="0" y="0" width="1" height="671" fill="#111"/><rect x="1" y="172" width="1" height="495" fill="#f0f0f0"/>
</svg>
</div></body></html>
